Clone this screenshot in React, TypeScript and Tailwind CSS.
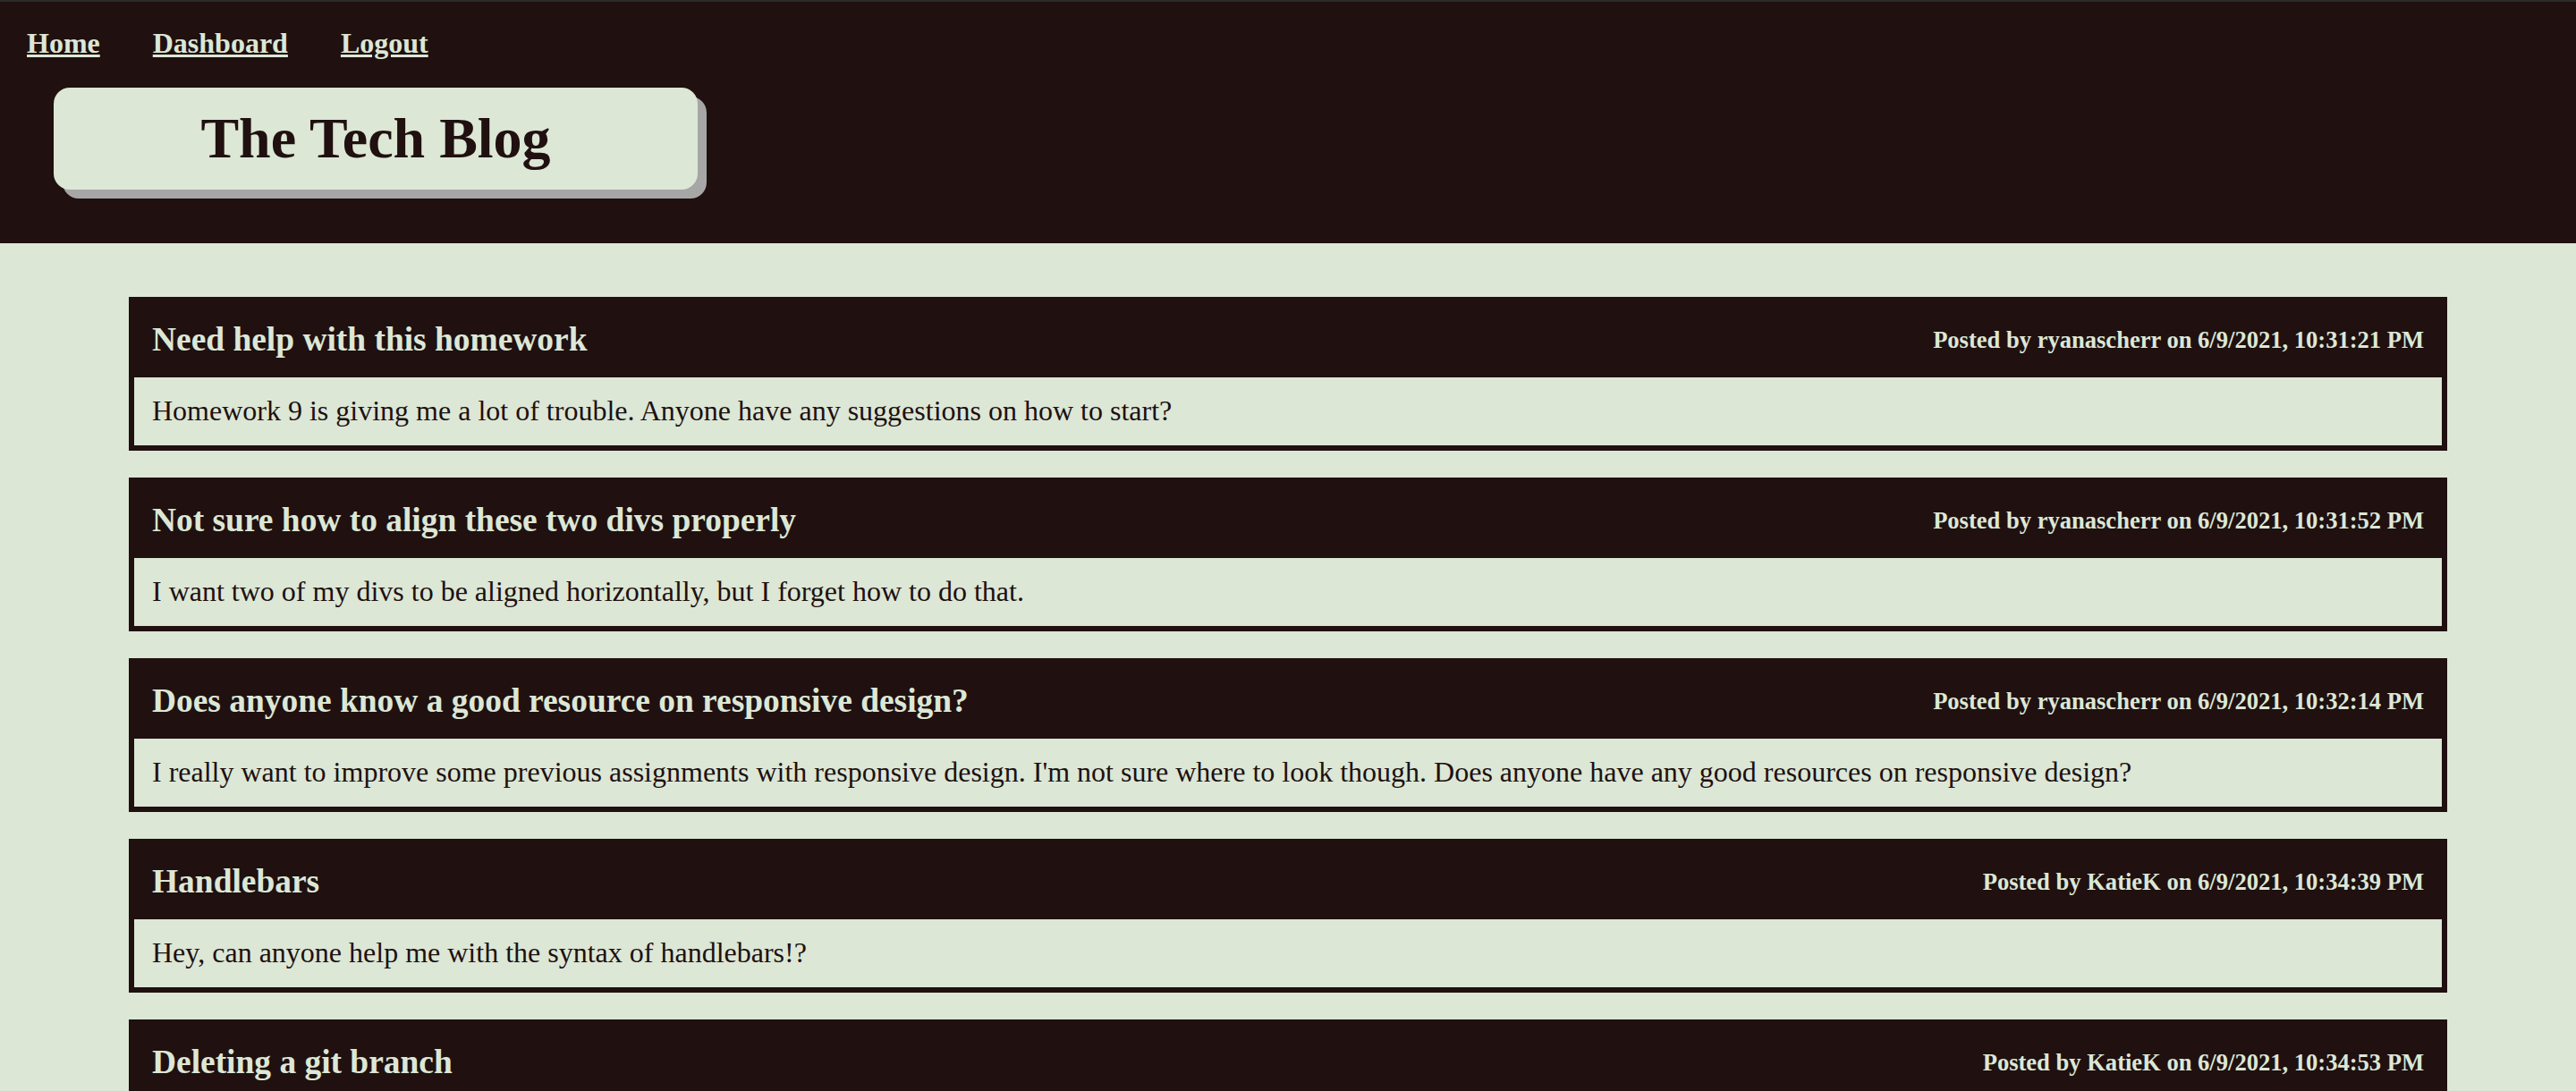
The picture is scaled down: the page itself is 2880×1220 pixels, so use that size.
import React from 'react';

interface Post {
  title: string;
  author: string;
  date: string;
  body: string;
}

const posts: Post[] = [
  {
    title: 'Need help with this homework',
    author: 'ryanascherr',
    date: '6/9/2021, 10:31:21 PM',
    body: 'Homework 9 is giving me a lot of trouble. Anyone have any suggestions on how to start?',
  },
  {
    title: 'Not sure how to align these two divs properly',
    author: 'ryanascherr',
    date: '6/9/2021, 10:31:52 PM',
    body: 'I want two of my divs to be aligned horizontally, but I forget how to do that.',
  },
  {
    title: 'Does anyone know a good resource on responsive design?',
    author: 'ryanascherr',
    date: '6/9/2021, 10:32:14 PM',
    body: "I really want to improve some previous assignments with responsive design. I'm not sure where to look though. Does anyone have any good resources on responsive design?",
  },
  {
    title: 'Handlebars',
    author: 'KatieK',
    date: '6/9/2021, 10:34:39 PM',
    body: 'Hey, can anyone help me with the syntax of handlebars!?',
  },
  {
    title: 'Deleting a git branch',
    author: 'KatieK',
    date: '6/9/2021, 10:34:53 PM',
    body: 'How do I delete a branch in git once it has been merged?',
  },
];

const PostCard: React.FC<{ post: Post }> = ({ post }) => (
  <div className="border-[6px] border-[#201010] bg-[#201010]">
    <div className="flex h-[84px] items-center justify-between px-[20px] text-[#dce7d6]">
      <h3 className="text-[37.44px] font-bold">{post.title}</h3>
      <h5 className="text-[26.56px] font-bold">
        Posted by {post.author} on {post.date}
      </h5>
    </div>
    <div className="flex h-[76px] items-center bg-[#dce7d6] px-[20px] text-[#201010]">
      <p>{post.body}</p>
    </div>
  </div>
);

export default function App() {
  return (
    <div className="min-h-screen bg-[#dce7d6] text-[32px] leading-[1.15] font-['Liberation_Serif',_'Times_New_Roman',_serif]">
      <header className="border-t-2 border-[#2b2b2b] bg-[#201010] pt-[28px] pb-[60px]">
        <nav className="flex gap-[59px] pl-[30px] font-bold text-[#dce7d6]">
          <a href="#" className="underline">Home</a>
          <a href="#" className="underline">Dashboard</a>
          <a href="#" className="underline">Logout</a>
        </nav>
        <div className="ml-[60px] mt-[31px] flex h-[114px] w-[720px] items-center justify-center rounded-[18px] bg-[#dce7d6] shadow-[10px_10px_0_#a6a6a6]">
          <h1 className="text-[64px] font-bold text-[#201010]">The Tech Blog</h1>
        </div>
      </header>
      <main className="mx-auto flex w-[90%] flex-col gap-[30px] pt-[60px] pb-[60px]">
        {posts.map((post) => (
          <PostCard key={post.date} post={post} />
        ))}
      </main>
    </div>
  );
}
